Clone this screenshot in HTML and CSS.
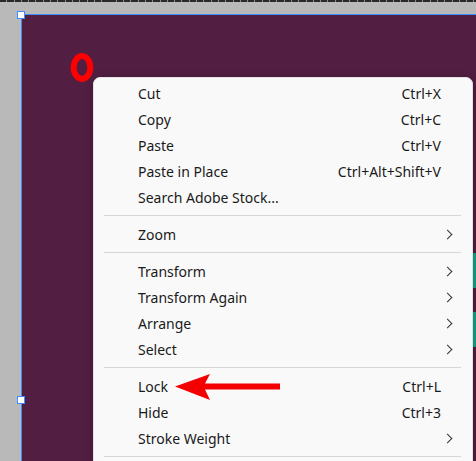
FILE: index.html
```html
<!DOCTYPE html>
<html lang="en">
	<head>
		<meta charset="UTF-8" />
		<meta name="viewport" content="width=device-width, initial-scale=1.0" />
		<title>Context Menu</title>

		<link rel="stylesheet" href="styles.css">
	</head>

	<body>
		<div class="screen">
			<div class="ruler"></div>
			<div class="pasteboard">
				<div class="artboard">
					<div class="shape shape--one"></div>
					<div class="shape shape--two"></div>
				</div>
			</div>

			<span class="handle handle--top"></span>
			<span class="handle handle--mid"></span>

			<svg class="mark" width="24" height="31" viewBox="0 0 24 31">
				<ellipse cx="12" cy="15.5" rx="8.3" ry="11.4" fill="none" stroke="#ff0000" stroke-width="6" />
			</svg>

			<div class="menu">
				<ul class="menu__group">
					<li class="menu__item"><span>Cut</span><span class="menu__key">Ctrl+X</span></li>
					<li class="menu__item"><span>Copy</span><span class="menu__key">Ctrl+C</span></li>
					<li class="menu__item"><span>Paste</span><span class="menu__key">Ctrl+V</span></li>
					<li class="menu__item"><span>Paste in Place</span><span class="menu__key">Ctrl+Alt+Shift+V</span></li>
					<li class="menu__item"><span>Search Adobe Stock...</span></li>
				</ul>
				<ul class="menu__group">
					<li class="menu__item menu__item--sub"><span>Zoom</span></li>
				</ul>
				<ul class="menu__group">
					<li class="menu__item menu__item--sub"><span>Transform</span></li>
					<li class="menu__item menu__item--sub"><span>Transform Again</span></li>
					<li class="menu__item menu__item--sub"><span>Arrange</span></li>
					<li class="menu__item menu__item--sub"><span>Select</span></li>
				</ul>
				<ul class="menu__group">
					<li class="menu__item"><span>Lock</span><span class="menu__key">Ctrl+L</span></li>
					<li class="menu__item"><span>Hide</span><span class="menu__key">Ctrl+3</span></li>
					<li class="menu__item menu__item--sub"><span>Stroke Weight</span></li>
				</ul>
			</div>

			<svg class="arrow" width="106" height="28" viewBox="0 0 106 28">
				<polygon points="0,13.5 35,1 30,10.5 105,10.5 105,16.5 30,16.5 35,27" fill="#f40000" />
			</svg>
		</div>
	</body>
</html>
```

FILE: styles.css
```css
* {
	margin: 0;
	padding: 0;
	box-sizing: border-box;
}

body {
	width: 476px;
	height: 461px;
	overflow: hidden;
	font-family: "Noto Sans", "Liberation Sans", sans-serif;
}

.screen {
	position: relative;
	width: 476px;
	height: 461px;
	background: #b9b9b9;
	display: flex;
	flex-direction: column;
	overflow: hidden;
}

.ruler {
	height: 2px;
	flex: none;
	background: repeating-linear-gradient(90deg, #2a2a2a 0, #2a2a2a 6.3px, #8a8a8a 6.3px, #8a8a8a 7.3px);
}

.pasteboard {
	flex: 1;
	padding: 12px 0 0 21px;
	display: flex;
}

.artboard {
	position: relative;
	flex: 1;
	background: #521e42;
	border-top: 1px solid #3f8cff;
	border-left: 1px solid #3f8cff;
}

.shape {
	position: absolute;
	right: 0;
	width: 4px;
	background: #13a38b;
}

.shape--one {
	top: 238px;
	height: 35px;
}

.shape--two {
	top: 297px;
	height: 35px;
}

.handle {
	position: absolute;
	left: 17px;
	width: 8px;
	height: 8px;
	background: #fff;
	border: 1px solid #3f8cff;
}

.handle--top {
	top: 11px;
}

.handle--mid {
	top: 396px;
}

.mark {
	position: absolute;
	left: 70px;
	top: 52px;
}

.menu {
	position: absolute;
	left: 93px;
	top: 77px;
	width: 380px;
	height: 400px;
	padding-top: 2px;
	background: #f9f9f9;
	border: 1px solid #e2e2e2;
	border-radius: 7px;
	box-shadow: 0 2px 10px rgba(0, 0, 0, 0.28);
	color: #1a1a1a;
	font-size: 14px;
}

.menu__group {
	list-style: none;
	padding-bottom: 5px;
	margin: 0 11px 5px 10px;
	border-bottom: 1px solid #d6d6d6;
}

.menu__item {
	height: 26px;
	display: flex;
	align-items: center;
	justify-content: space-between;
	padding: 0 7px 0 34px;
}

.menu__key {
	margin-right: 13px;
}

.menu__item--sub::after {
	content: "";
	width: 6px;
	height: 6px;
	margin-right: 3px;
	border-top: 1.3px solid #333;
	border-right: 1.3px solid #333;
	transform: rotate(45deg);
}

.arrow {
	position: absolute;
	left: 175px;
	top: 373px;
}
```
